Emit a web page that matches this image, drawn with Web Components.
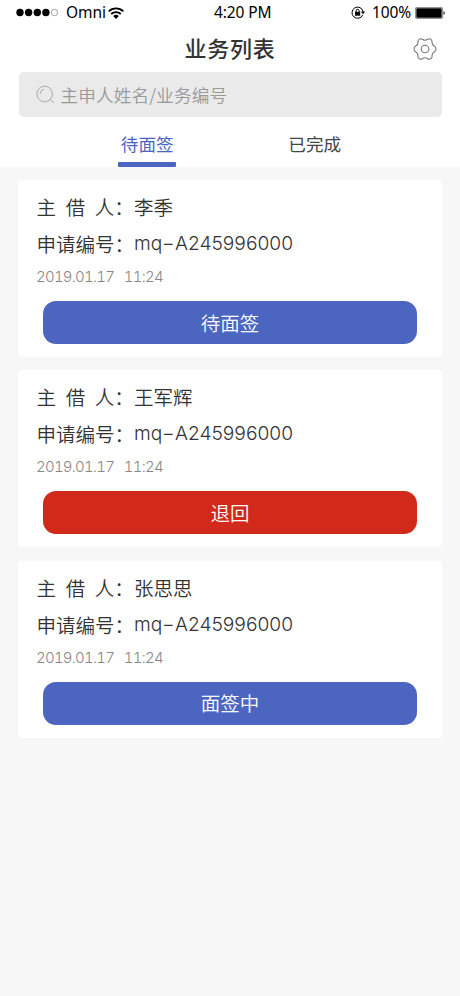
<!DOCTYPE html>
<html lang="zh-CN">
<head>
  <meta charset="UTF-8">
  <meta name="viewport" content="width=device-width, initial-scale=1.0">
  <title>业务列表</title>
  <style>
    :root {
      --primary: #4c65c1;
      --danger: #d1291a;
      --page-bg: #f7f7f7;
      --text-primary: #333;
      --text-secondary: #888;
    }
    body {
      margin: 0;
      background: var(--page-bg);
      color: var(--text-primary);
      font-family: "Noto Sans CJK SC", sans-serif;
    }
  </style>
</head>
<body>
  <business-page>
    <status-bar slot="header" carrier="Omni" time="4:20 PM" battery="100%"></status-bar>
    <nav-header slot="header">业务列表</nav-header>
    <search-field slot="header">主申人姓名/业务编号</search-field>
    <tab-bar slot="header">
      <tab-item active>待面签</tab-item>
      <tab-item>已完成</tab-item>
    </tab-bar>
    <business-card name="李季" number="mq-A245996000" time="2019.01.17  11:24">待面签</business-card>
    <business-card name="王军辉" number="mq-A245996000" time="2019.01.17  11:24" status="rejected">退回</business-card>
    <business-card name="张思思" number="mq-A245996000" time="2019.01.17  11:24">面签中</business-card>
  </business-page>

  <script>
    class BusinessPage extends HTMLElement {
      connectedCallback() {
        this.attachShadow({ mode: 'open' });
        this.shadowRoot.innerHTML = `
          <style>
            :host {
              display: block;
              min-height: 996px;
            }
            header {
              background: #fff;
              height: 167px;
            }
            main {
              display: flex;
              flex-direction: column;
              gap: 13.3px;
              padding: 13px 18px;
            }
          </style>
          <header><slot name="header"></slot></header>
          <main><slot></slot></main>
        `;
      }
    }
    customElements.define('business-page', BusinessPage);

    class StatusBar extends HTMLElement {
      connectedCallback() {
        this.attachShadow({ mode: 'open' });
        this.shadowRoot.innerHTML = `
          <style>
            :host {
              display: grid;
              grid-template-columns: 198px auto 1fr;
              align-items: center;
              height: 25px;
              padding: 0 14px 0 16px;
              color: #000;
              font: 15.5px/25px "Noto Sans", sans-serif;
              letter-spacing: -.1px;
            }
            .left, .right {
              display: flex;
              align-items: center;
            }
            .right {
              justify-content: flex-end;
            }
            svg {
              display: block;
            }
            .carrier {
              margin: 0 2px 0 7px;
            }
            .battery {
              margin: 0 4px 0 6px;
            }
          </style>
          <div class="left">
            <svg width="43" height="9" viewBox="0 0 43 9">
              <circle cx="4" cy="4.5" r="3.7"/>
              <circle cx="12.6" cy="4.5" r="3.7"/>
              <circle cx="21.3" cy="4.5" r="3.7"/>
              <circle cx="29.9" cy="4.5" r="3.7"/>
              <circle cx="38.5" cy="4.5" r="3.2" fill="none" stroke="#777" stroke-width=".7"/>
            </svg>
            <span class="carrier">${this.getAttribute('carrier')}</span>
            <svg width="16" height="12" viewBox="0 0 16 12" fill="none" stroke="#000" stroke-width="1.8">
              <path d="M.7 4.4a10.4 10.4 0 0 1 14.6 0M3.2 7a6.9 6.9 0 0 1 9.6 0"/>
              <path d="M5.2 9.1a4 4 0 0 1 5.6 0L8 11.9z" fill="#000" stroke="none"/>
            </svg>
          </div>
          <span>${this.getAttribute('time')}</span>
          <div class="right">
            <svg width="15" height="13" viewBox="0 0 15 13" fill="none" stroke="#000">
              <path d="M11.8 8.8a5.6 5.6 0 1 1 .3-3.2" stroke-width="1"/>
              <path d="M9.9 5.5h4.3L12 8.2z" fill="#000" stroke="none"/>
              <rect x="4" y="5.8" width="5.2" height="3.9" fill="#000" stroke="none"/>
              <path d="M5.1 6V4.8a1.5 1.5 0 0 1 3 0V6"/>
            </svg>
            <span class="battery">${this.getAttribute('battery')}</span>
            <svg width="31" height="12" viewBox="0 0 31 12">
              <rect x=".4" y=".4" width="27.2" height="11.2" rx="1.5" fill="none" stroke="#555" stroke-width=".7"/>
              <rect x="1.3" y="1.3" width="25.4" height="9.4" rx=".7"/>
              <path d="M28.6 4c1.5.5 1.5 3.5 0 4z"/>
            </svg>
          </div>
        `;
      }
    }
    customElements.define('status-bar', StatusBar);

    class NavHeader extends HTMLElement {
      connectedCallback() {
        this.attachShadow({ mode: 'open' });
        this.shadowRoot.innerHTML = `
          <style>
            :host {
              display: grid;
              grid-template-columns: 1fr auto 1fr;
              align-items: center;
              height: 47px;
              padding: 0 23px;
            }
            h1 {
              grid-column: 2;
              margin: 0;
              font-size: 22px;
              font-weight: 500;
              line-height: 45px;
              height: 47px;
              letter-spacing: .8px;
            }
            svg {
              justify-self: end;
            }
          </style>
          <h1><slot></slot></h1>
          <svg width="24" height="24" viewBox="0 0 24 24" fill="none" stroke="#777" stroke-width="1.1" stroke-linejoin="round">
            <path d="M9.2 2.3Q12 4.1 14.8 2.3 16.6 1 18.2 2.6 19.3 3.6 19 5.2 18.9 7.6 21.2 8.9 23 9.9 23 12 23 14.1 21.2 15.1 18.9 16.4 19 18.8 19.3 20.4 18.2 21.4 16.6 23 14.8 21.7 12 19.9 9.2 21.7 7.4 23 5.8 21.4 4.7 20.4 5 18.8 5.1 16.4 2.8 15.1 1 14.1 1 12 1 9.9 2.8 8.9 5.1 7.6 5 5.2 4.7 3.6 5.8 2.6 7.4 1 9.2 2.3z"/>
            <circle cx="12" cy="12" r="3.8"/>
          </svg>
        `;
      }
    }
    customElements.define('nav-header', NavHeader);

    class SearchField extends HTMLElement {
      connectedCallback() {
        this.attachShadow({ mode: 'open' });
        this.shadowRoot.innerHTML = `
          <style>
            :host {
              display: flex;
              align-items: center;
              gap: 5.5px;
              height: 45px;
              margin: 0 18.5px;
              padding-left: 17.5px;
              box-sizing: border-box;
              border-radius: 5px;
              background: #eaeaea;
              color: #999;
              font-size: 17.6px;
              font-weight: 350;
              line-height: 45px;
              letter-spacing: .15px;
            }
          </style>
          <svg width="19" height="19" viewBox="0 0 19 19" fill="none" stroke="#aaa" stroke-width="1" stroke-linecap="round">
            <circle cx="8.7" cy="9" r="7.8"/>
            <path d="M14.3 14.6l3.2 3M4 8.5A4.8 4.8 0 0 1 7.8 4.3"/>
          </svg>
          <span><slot></slot></span>
        `;
      }
    }
    customElements.define('search-field', SearchField);

    class TabBar extends HTMLElement {
      connectedCallback() {
        this.attachShadow({ mode: 'open' });
        this.shadowRoot.innerHTML = `
          <style>
            :host {
              display: grid;
              grid-template-columns: 1fr 1fr;
              height: 50px;
              padding: 0 61.5px 0 63.5px;
            }
          </style>
          <slot></slot>
        `;
      }
    }
    customElements.define('tab-bar', TabBar);

    class TabItem extends HTMLElement {
      connectedCallback() {
        this.attachShadow({ mode: 'open' });
        this.shadowRoot.innerHTML = `
          <style>
            :host {
              display: flex;
              flex-direction: column;
              align-items: center;
              font-size: 17.6px;
              line-height: 45px;
              height: 50px;
              color: #444;
            }
            :host([active]) {
              color: var(--primary);
            }
            .label {
              height: 45px;
              padding-top: 4px;
              box-sizing: border-box;
            }
            .line {
              width: 58px;
              height: 5.5px;
              border-radius: 1px;
            }
            :host([active]) .line {
              background: var(--primary);
            }
          </style>
          <span class="label"><slot></slot></span>
          <span class="line"></span>
        `;
      }
    }
    customElements.define('tab-item', TabItem);

    class BusinessCard extends HTMLElement {
      connectedCallback() {
        const number = this.getAttribute('number').replace('-', '<span class="dash">-</span>');
        this.attachShadow({ mode: 'open' });
        this.shadowRoot.innerHTML = `
          <style>
            :host {
              display: block;
              height: 177px;
              padding: 8px 25px 0 18.5px;
              box-sizing: border-box;
              border-radius: 4px;
              background: #fff;
            }
            .row {
              display: flex;
              height: 37px;
              font-size: 19.5px;
              font-weight: 350;
              line-height: 37px;
              white-space: pre;
            }
            .label {
              width: 97.5px;
            }
            .spread {
              word-spacing: 5.3px;
            }
            .number {
              font-family: Inter, sans-serif;
              font-size: 19.2px;
              font-weight: 300;
            }
            .dash {
              display: inline-block;
              margin: 0 2px;
              transform: scaleX(1.45);
            }
            .time {
              height: 30px;
              margin-left: -.5px;
              color: var(--text-secondary);
              font: 300 15px/30px Inter, sans-serif;
              font-variant-numeric: tabular-nums;
              letter-spacing: -.75px;
              word-spacing: 1.5px;
              white-space: pre;
            }
            .action {
              display: block;
              width: 374px;
              height: 43px;
              margin: 9px 0 0 6.5px;
              padding: 0 0 1px;
              border: 0;
              border-radius: 13px;
              background: var(--primary);
              color: #fff;
              font: 350 19.5px/41px "Noto Sans CJK SC", sans-serif;
            }
            :host([status="rejected"]) .action {
              background: var(--danger);
            }
          </style>
          <div class="row"><span class="label spread">主 借 人：</span><span>${this.getAttribute('name')}</span></div>
          <div class="row"><span class="label">申请编号：</span><span class="number">${number}</span></div>
          <div class="time">${this.getAttribute('time')}</div>
          <button class="action"><slot></slot></button>
        `;
      }
    }
    customElements.define('business-card', BusinessCard);
  </script>
</body>
</html>
